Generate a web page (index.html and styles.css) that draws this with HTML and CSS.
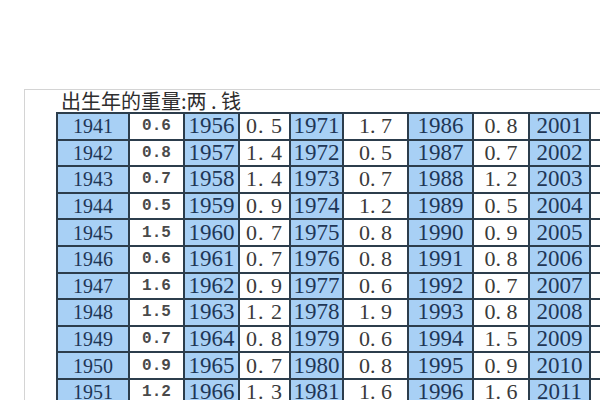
FILE: index.html
```html
<!DOCTYPE html>
<html lang="zh">
<head>
<meta charset="utf-8">
<title>出生年的重量</title>
<link rel="stylesheet" href="styles.css">
</head>
<body>
<div class="frame">
  <div class="caption">出生年的重量:两 . 钱</div>
  <table class="grid">
    <colgroup>
      <col class="w72"><col class="w55"><col class="w55"><col class="w51"><col class="w53"><col class="w65"><col class="w65"><col class="w56"><col class="w61"><col class="w60">
    </colgroup>
    <tbody>
      <tr><td class="y y1">1941</td><td class="s">0.6</td><td class="y">1956</td><td class="d d4">0. 5</td><td class="y">1971</td><td class="d">1. 7</td><td class="y">1986</td><td class="d">0. 8</td><td class="y">2001</td><td class="d"></td></tr>
      <tr><td class="y y1">1942</td><td class="s">0.8</td><td class="y">1957</td><td class="d d4">1. 4</td><td class="y">1972</td><td class="d">0. 5</td><td class="y">1987</td><td class="d">0. 7</td><td class="y">2002</td><td class="d"></td></tr>
      <tr><td class="y y1">1943</td><td class="s">0.7</td><td class="y">1958</td><td class="d d4">1. 4</td><td class="y">1973</td><td class="d">0. 7</td><td class="y">1988</td><td class="d">1. 2</td><td class="y">2003</td><td class="d"></td></tr>
      <tr><td class="y y1">1944</td><td class="s">0.5</td><td class="y">1959</td><td class="d d4">0. 9</td><td class="y">1974</td><td class="d">1. 2</td><td class="y">1989</td><td class="d">0. 5</td><td class="y">2004</td><td class="d"></td></tr>
      <tr><td class="y y1">1945</td><td class="s">1.5</td><td class="y">1960</td><td class="d d4">0. 7</td><td class="y">1975</td><td class="d">0. 8</td><td class="y">1990</td><td class="d">0. 9</td><td class="y">2005</td><td class="d"></td></tr>
      <tr><td class="y y1">1946</td><td class="s">0.6</td><td class="y">1961</td><td class="d d4">0. 7</td><td class="y">1976</td><td class="d">0. 8</td><td class="y">1991</td><td class="d">0. 8</td><td class="y">2006</td><td class="d"></td></tr>
      <tr><td class="y y1">1947</td><td class="s">1.6</td><td class="y">1962</td><td class="d d4">0. 9</td><td class="y">1977</td><td class="d">0. 6</td><td class="y">1992</td><td class="d">0. 7</td><td class="y">2007</td><td class="d"></td></tr>
      <tr><td class="y y1">1948</td><td class="s">1.5</td><td class="y">1963</td><td class="d d4">1. 2</td><td class="y">1978</td><td class="d">1. 9</td><td class="y">1993</td><td class="d">0. 8</td><td class="y">2008</td><td class="d"></td></tr>
      <tr><td class="y y1">1949</td><td class="s">0.7</td><td class="y">1964</td><td class="d d4">0. 8</td><td class="y">1979</td><td class="d">0. 6</td><td class="y">1994</td><td class="d">1. 5</td><td class="y">2009</td><td class="d"></td></tr>
      <tr><td class="y y1">1950</td><td class="s">0.9</td><td class="y">1965</td><td class="d d4">0. 7</td><td class="y">1980</td><td class="d">0. 8</td><td class="y">1995</td><td class="d">0. 9</td><td class="y">2010</td><td class="d"></td></tr>
      <tr><td class="y y1">1951</td><td class="s">1.2</td><td class="y">1966</td><td class="d d4">1. 3</td><td class="y">1981</td><td class="d">1. 6</td><td class="y">1996</td><td class="d">1. 6</td><td class="y">2011</td><td class="d"></td></tr>
    </tbody>
  </table>
</div>
</body>
</html>
```

FILE: styles.css
```css
html, body {
  margin: 0;
  padding: 0;
  background: #ffffff;
  overflow: hidden;
  width: 600px;
  height: 400px;
}

.frame {
  margin: 89px 0 0 24px;
  width: 576px;
  height: 311px;
  overflow: hidden;
  border-top: 1px solid #d4d4d4;
  border-left: 1px solid #d4d4d4;
  padding-left: 31px;
  box-sizing: border-box;
}

.caption {
  font-family: "Noto Sans CJK SC", "Noto Sans", sans-serif;
  font-size: 20px;
  line-height: 22px;
  height: 22px;
  color: #2e2e2e;
  margin-left: 5px;
  white-space: nowrap;
}

.grid {
  border-collapse: collapse;
  table-layout: fixed;
  width: 593px;
}

.w72 { width: 72px; }
.w55 { width: 55px; }
.w51 { width: 51px; }
.w53 { width: 53px; }
.w65 { width: 65px; }
.w56 { width: 56px; }
.w61 { width: 61px; }
.w60 { width: 60px; }

.grid td {
  border: 2px solid #2c3d4c;
  height: 24.6px;
  padding: 0;
  text-align: center;
  vertical-align: middle;
  white-space: nowrap;
  overflow: hidden;
  line-height: 22px;
}

.y {
  background: #a8d0f5;
  color: #1e3656;
  font-family: "Liberation Serif", serif;
  font-size: 23px;
}

.y1 {
  font-size: 20px;
}

.s {
  background: #ffffff;
  color: #4a4a4a;
  font-family: "Liberation Mono", monospace;
  font-weight: bold;
  font-size: 16px;
}

.d {
  background: #ffffff;
  color: #3a3a3a;
  font-family: "Liberation Serif", serif;
  font-size: 22px;
}

.d4 {
  letter-spacing: 1px;
}
```
